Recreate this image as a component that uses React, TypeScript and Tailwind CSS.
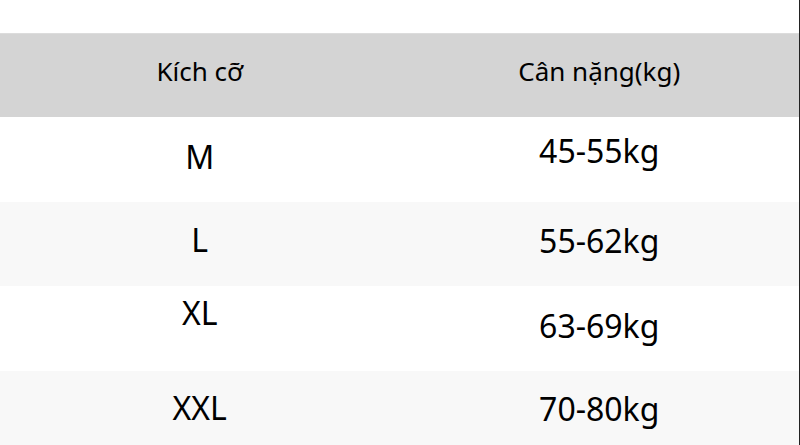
import React from "react";

const rows = [
  { size: "M", weight: "45-55kg", bg: "bg-white", h: "h-[85px]", s: "-translate-y-[3px]", w: "-translate-y-[9px]" },
  { size: "L", weight: "55-62kg", bg: "bg-[#f8f8f8]", h: "h-[84px]", s: "-translate-y-[4px]", w: "-translate-y-[3px]" },
  { size: "XL", weight: "63-69kg", bg: "bg-white", h: "h-[85px]", s: "-translate-y-[16px]", w: "-translate-y-[3px]" },
  { size: "XXL", weight: "70-80kg", bg: "bg-[#f8f8f8]", h: "h-[84px]", s: "-translate-y-[5px]", w: "-translate-y-[4px]" },
];

export default function App() {
  return (
    <div
      className="w-[800px] h-[445px] overflow-hidden bg-white border-r border-[#222] text-black"
      style={{ fontFamily: '"Noto Sans", "Open Sans", sans-serif' }}
    >
      <div className="h-[33px]" />
      <div className="grid grid-cols-2 h-[84px] bg-[#d4d4d4] border-t border-[#dcdcdc] text-[26px] leading-none">
        <div className="flex items-center justify-center -translate-y-[5px]">Kích cỡ</div>
        <div className="flex items-center justify-center -translate-y-[5px]">Cân nặng(kg)</div>
      </div>
      {rows.map((r) => (
        <div key={r.size} className={`grid grid-cols-2 ${r.h} ${r.bg} text-[32px] leading-none`}>
          <div className={`flex items-center justify-center ${r.s}`}>{r.size}</div>
          <div className={`flex items-center justify-center ${r.w}`}>{r.weight}</div>
        </div>
      ))}
    </div>
  );
}
